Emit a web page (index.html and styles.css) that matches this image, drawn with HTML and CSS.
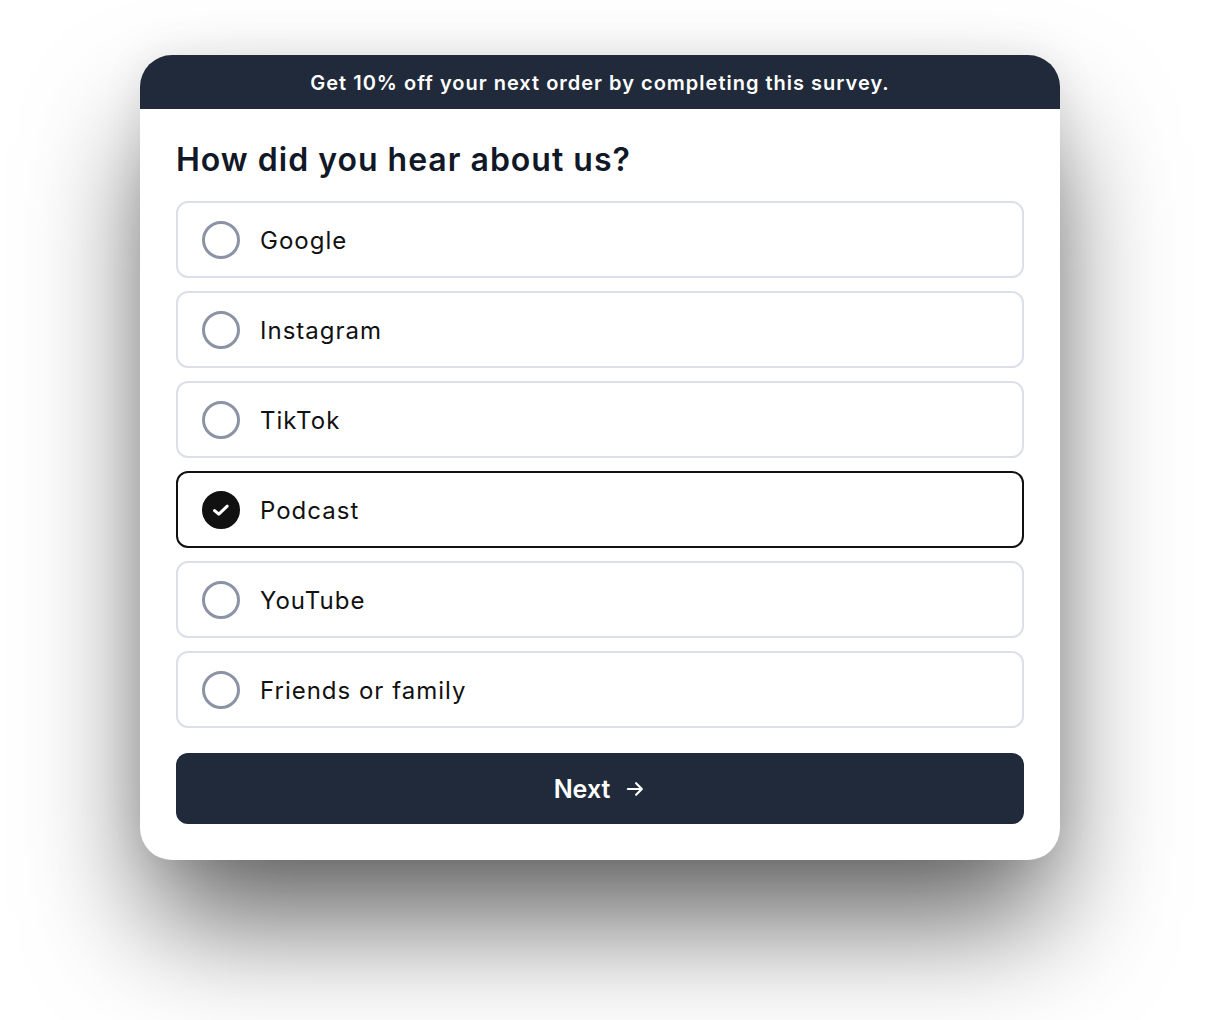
FILE: index.html
```html
<!DOCTYPE html>
<html lang="en">
<head>
  <meta charset="UTF-8" />
  <meta name="viewport" content="width=device-width, initial-scale=1.0"/>
  <title>Survey</title>
  <link rel="stylesheet" href="styles.css">
</head>
<body>

  <div class="survey-card">
    <div class="survey-banner">Get 10% off your next order by completing this survey.</div>
    <div class="survey-body">
      <h1 class="survey-title">How did you hear about us?</h1>

      <div class="options">
        <label class="option"><span class="radio"></span>Google</label>
        <label class="option"><span class="radio"></span>Instagram</label>
        <label class="option"><span class="radio"></span>TikTok</label>
        <label class="option selected">
          <span class="radio">
            <svg viewBox="0 0 20 20" width="20" height="20"><path d="M3.6 10.6 7.8 14.2 16.2 6.2" fill="none" stroke="#fff" stroke-width="3" stroke-linecap="round" stroke-linejoin="round"/></svg>
          </span>Podcast
        </label>
        <label class="option"><span class="radio"></span>YouTube</label>
        <label class="option"><span class="radio"></span>Friends or family</label>
      </div>

      <button class="next-btn">
        Next
        <svg viewBox="0 0 20 20" width="22" height="22"><path d="M3.5 10h12.5M11 4.8 16.2 10 11 15.2" fill="none" stroke="#fff" stroke-width="2" stroke-linecap="round" stroke-linejoin="round"/></svg>
      </button>
    </div>
  </div>

</body>
</html>
```

FILE: styles.css
```css
html {
  background-color: #ffffff;
}

body {
  font-family: Inter, "Noto Sans", sans-serif;
  font-optical-sizing: none;
  margin: 0;
  padding: 55px 0 0 140px;
  min-height: 1020px;
  box-sizing: border-box;
  background-color: #ffffff;
}

.survey-card {
  width: 920px;
  background: white;
  border-radius: 32px;
  overflow: hidden;
  box-shadow: 0 70px 120px -10px rgba(0, 0, 0, 0.62), 0 0 40px rgba(0, 0, 0, 0.08);
}

.survey-banner {
  height: 54px;
  display: flex;
  align-items: center;
  justify-content: center;
  background: #202a3a;
  color: white;
  font-size: 20px;
  font-weight: 600;
  letter-spacing: 1px;
  padding-top: 1px;
  box-sizing: border-box;
}

.survey-body {
  padding: 31px 36px 36px 36px;
}

.survey-title {
  margin: 0 0 21px 0;
  font-size: 32px;
  line-height: 40px;
  font-weight: 600;
  letter-spacing: 1px;
  color: #111827;
}

.options {
  display: flex;
  flex-direction: column;
  gap: 13px;
}

.option {
  display: flex;
  align-items: center;
  gap: 20px;
  height: 77px;
  box-sizing: border-box;
  padding-left: 24px;
  padding-top: 2px;
  border: 2px solid #dcdfe7;
  border-radius: 12px;
  font-size: 24px;
  letter-spacing: 1px;
  color: #111111;
  cursor: pointer;
}

.radio {
  width: 38px;
  height: 38px;
  margin-top: -2px;
  box-sizing: border-box;
  border: 3px solid #8b93a5;
  border-radius: 50%;
  display: flex;
  align-items: center;
  justify-content: center;
}

.selected {
  border-color: #111111;
}

.selected .radio {
  background: #111111;
  border-color: #111111;
}

.next-btn {
  margin-top: 25px;
  width: 100%;
  height: 71px;
  display: flex;
  align-items: center;
  justify-content: center;
  gap: 14px;
  background: #202a3a;
  color: white;
  border: none;
  border-radius: 12px;
  font-family: inherit;
  font-size: 25px;
  font-weight: 600;
  cursor: pointer;
}
```
